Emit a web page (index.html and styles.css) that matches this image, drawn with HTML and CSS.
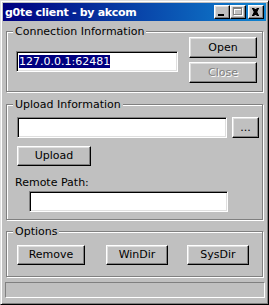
FILE: index.html
```html
<!DOCTYPE html>
<html lang="en">
<head>
    <meta charset="UTF-8">
    <title>g0te client - by akcom</title>
    <link rel="stylesheet" href="styles.css">
</head>
<body>
    <div class="window">
        <div class="titlebar">
            <span class="title">g0te client - by akcom</span>
            <div class="caption-buttons">
                <div class="cbtn">
                    <svg width="16" height="14" viewBox="0 0 16 14"><rect x="4" y="9" width="6" height="2" fill="#000"/></svg>
                </div>
                <div class="cbtn">
                    <svg width="16" height="14" viewBox="0 0 16 14">
                        <path d="M4 3h9v8h-9z M5 5h7v5h-7z" fill="#fff" fill-rule="evenodd"/>
                        <path d="M3 2h9v8h-9z M4 4h7v5h-7z" fill="#808080" fill-rule="evenodd"/>
                    </svg>
                </div>
                <div class="cbtn close">
                    <svg width="16" height="14" viewBox="0 0 16 14"><path d="M4 3h2l1 1h1l1-1h2v1l-1 1v1l-1 1 1 1v1l1 1v1h-2l-1-1h-1l-1 1h-2v-1l1-1v-1l1-1-1-1v-1l-1-1z" fill="#000"/></svg>
                </div>
            </div>
        </div>

        <div class="client">
            <div class="group conn">
                <div class="legend">Connection Information</div>
                <div class="conn-row">
                    <div class="conn-left">
                        <div class="edit host"><span class="sel">127.0.0.1:62481</span></div>
                    </div>
                    <div class="conn-right">
                        <div class="btn open">Open</div>
                        <div class="btn close-btn disabled">Close</div>
                    </div>
                </div>
            </div>

            <div class="group upload">
                <div class="legend">Upload Information</div>
                <div class="file-row">
                    <div class="edit file"></div>
                    <div class="btn browse">...</div>
                </div>
                <div class="btn upload-btn">Upload</div>
                <div class="label">Remote Path:</div>
                <div class="edit remote"></div>
            </div>

            <div class="group options">
                <div class="legend">Options</div>
                <div class="opt-row">
                    <div class="btn remove">Remove</div>
                    <div class="btn windir">WinDir</div>
                    <div class="btn sysdir">SysDir</div>
                </div>
            </div>

            <div class="statusbar"></div>
        </div>
    </div>
</body>
</html>
```

FILE: styles.css
```css
body {
    margin: 0;
    background: #c0c0c0;
    font-family: "DejaVu Sans", Verdana, sans-serif;
    font-size: 11px;
    color: #000;
}

.window {
    width: 269px;
    height: 305px;
    box-sizing: border-box;
    background: #c0c0c0;
    border: 1px solid;
    border-color: #dfdfdf #000 #000 #dfdfdf;
    box-shadow: inset 1px 1px 0 #fff, inset -1px -1px 0 #808080;
    padding: 2px;
}

.titlebar {
    height: 18px;
    display: flex;
    align-items: center;
    justify-content: space-between;
    background: linear-gradient(to right, #000080, #1084d0);
    padding: 0 2px;
}

.title {
    color: #fff;
    font-weight: bold;
    font-size: 11px;
    letter-spacing: -0.3px;
    white-space: nowrap;
}

.caption-buttons {
    display: flex;
}

.cbtn {
    width: 16px;
    height: 14px;
    box-sizing: border-box;
    background: #c0c0c0;
    border: 1px solid;
    border-color: #fff #000 #000 #fff;
    box-shadow: inset -1px -1px 0 #808080, inset 1px 1px 0 #dfdfdf;
}

.cbtn svg {
    display: block;
    margin: -1px 0 0 -1px;
}

.cbtn.close {
    margin-left: 2px;
}

.client {
    padding: 10px 0 0 3px;
}

.group {
    width: 257px;
    box-sizing: border-box;
    border: 1px solid #808080;
    box-shadow: 1px 1px 0 #fff, inset 1px 1px 0 #fff;
}

.legend {
    display: table;
    height: 13px;
    line-height: 13px;
    margin: -7px 0 -6px 6px;
    padding: 0 2px;
    background: #c0c0c0;
}

.edit {
    height: 21px;
    box-sizing: border-box;
    background: #fff;
    border: 1px solid;
    border-color: #808080 #fff #fff #808080;
    box-shadow: inset 1px 1px 0 #000, inset -1px -1px 0 #dfdfdf;
    padding: 3px 0 0 2px;
    line-height: 13px;
}

.sel {
    background: #000080;
    color: #fff;
}

.btn {
    height: 21px;
    box-sizing: border-box;
    background: #c0c0c0;
    border: 1px solid;
    border-color: #fff #000 #000 #fff;
    box-shadow: inset -1px -1px 0 #808080, inset 1px 1px 0 #dfdfdf;
    text-align: center;
    line-height: 19px;
}

.btn.disabled {
    color: #808080;
    text-shadow: 1px 1px 0 #fff;
}

/* connection */
.conn {
    padding-bottom: 8px;
}

.conn-row {
    display: flex;
}

.host {
    width: 162px;
    margin: 19px 0 0 9px;
}

.conn-right {
    margin: 5px 0 0 11px;
    width: 68px;
}

.close-btn {
    margin-top: 4px;
}

/* upload */
.upload {
    margin-top: 12px;
    padding-bottom: 7px;
}

.file-row {
    display: flex;
    margin: 12px 0 0 10px;
}

.file {
    width: 210px;
}

.browse {
    width: 27px;
    margin-left: 5px;
}

.upload-btn {
    width: 74px;
    height: 20px;
    line-height: 18px;
    margin: 8px 0 0 10px;
}

.label {
    margin: 10px 0 0 8px;
    line-height: 13px;
}

.remote {
    width: 199px;
    margin: 2px 0 0 22px;
}

/* options */
.options {
    margin-top: 11px;
    padding-bottom: 11px;
}

.opt-row {
    display: flex;
    margin: 13px 0 0 10px;
}

.opt-row .btn {
    height: 20px;
    line-height: 18px;
}

.remove {
    width: 68px;
}

.windir {
    width: 62px;
    margin-left: 21px;
}

.sysdir {
    width: 62px;
    margin-left: 19px;
}

.statusbar {
    width: 260px;
    height: 16px;
    box-sizing: border-box;
    margin: 5px 0 0 -1px;
    border: 1px solid;
    border-color: #808080 #fff #fff #808080;
}
```
